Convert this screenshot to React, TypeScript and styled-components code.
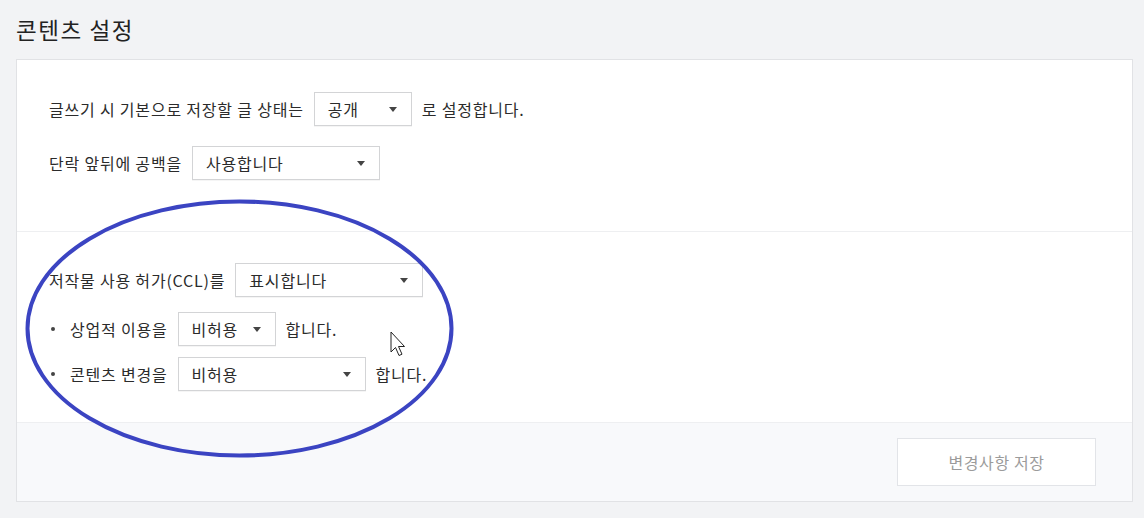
import React from "react";
import styled, { createGlobalStyle } from "styled-components";

const GlobalStyle = createGlobalStyle`
  html, body { margin: 0; padding: 0; background: #f2f3f5; }
  body { font-family: "Noto Sans CJK KR", "Noto Sans", sans-serif; color: #333; }
  * { box-sizing: border-box; }
`;

const Page = styled.div`
  position: relative;
  width: 1144px;
  height: 518px;
  padding: 14px 11px 0 16px;
  overflow: hidden;
`;

const Title = styled.h2`
  margin: 0 0 15px 0;
  font-size: 22.5px;
  font-weight: 400;
  line-height: 30px;
  color: #222;
  letter-spacing: 1.6px;
`;

const Card = styled.div`
  background: #fff;
  border: 1px solid #e1e2e5;
`;

const Section = styled.div<{ $pt: number; $pb: number; $divider?: boolean }>`
  display: flex;
  flex-direction: column;
  padding: ${(p) => p.$pt}px 32px ${(p) => p.$pb}px 32px;
  border-top: ${(p) => (p.$divider ? "1px solid #eeeff1" : "none")};
`;

const Row = styled.div<{ $mt?: number }>`
  display: flex;
  align-items: center;
  gap: 10px;
  margin-top: ${(p) => p.$mt ?? 0}px;
  font-size: 16px;
  line-height: 20px;
  letter-spacing: 0.8px;
  white-space: nowrap;
  color: #2b2b2b;
`;

const BulletRow = styled(Row)`
  &::before {
    content: "";
    width: 4px;
    height: 4px;
    border-radius: 50%;
    background: #444;
    margin: 0 5px 0 2px;
  }
`;

const Label = styled.span`
  display: inline-block;
`;

const SelectBox = styled.div<{ $w: number }>`
  display: flex;
  align-items: center;
  justify-content: space-between;
  width: ${(p) => p.$w}px;
  height: 34px;
  padding: 0 14px 0 13px;
  border: 1px solid #d3d4d6;
  box-shadow: 0 1px 0 rgba(0, 0, 0, 0.04);
  background: #fff;
  font-size: 16px;
  letter-spacing: 0.8px;
  color: #2b2b2b;
`;

const Caret = styled.span`
  width: 0;
  height: 0;
  border-left: 4px solid transparent;
  border-right: 4px solid transparent;
  border-top: 5px solid #444;
`;

const Footer = styled.div`
  display: flex;
  justify-content: flex-end;
  padding: 15px 36px 15px 0;
  background: #f8f9fb;
  border-top: 1px solid #eeeff1;
`;

const SaveButton = styled.button`
  width: 199px;
  height: 48px;
  border: 1px solid #e2e4e8;
  background: #fff;
  color: #9b9b9b;
  font-family: inherit;
  font-size: 16px;
  letter-spacing: 0.6px;
  cursor: default;
`;

const Annotation = styled.svg`
  position: absolute;
  left: 0;
  top: 0;
  pointer-events: none;
`;

const Select = ({ w, value }: { w: number; value: string }) => (
  <SelectBox $w={w}>
    <span>{value}</span>
    <Caret />
  </SelectBox>
);

export default function App() {
  return (
    <>
      <GlobalStyle />
      <Page>
        <Title>콘텐츠 설정</Title>
        <Card>
          <Section $pt={32} $pb={51}>
            <Row>
              <Label>글쓰기 시 기본으로 저장할 글 상태는</Label>
              <Select w={98} value="공개" />
              <Label>로 설정합니다.</Label>
            </Row>
            <Row $mt={20}>
              <Label>단락 앞뒤에 공백을</Label>
              <Select w={188} value="사용합니다" />
            </Row>
          </Section>
          <Section $pt={31} $pb={31} $divider>
            <Row>
              <Label>저작물 사용 허가(CCL)를</Label>
              <Select w={188} value="표시합니다" />
            </Row>
            <BulletRow $mt={15}>
              <Label>상업적 이용을</Label>
              <Select w={98} value="비허용" />
              <Label>합니다.</Label>
            </BulletRow>
            <BulletRow $mt={11}>
              <Label>콘텐츠 변경을</Label>
              <Select w={188} value="비허용" />
              <Label>합니다.</Label>
            </BulletRow>
          </Section>
          <Footer>
            <SaveButton>변경사항 저장</SaveButton>
          </Footer>
        </Card>
        <Annotation width="1144" height="518" viewBox="0 0 1144 518">
          <ellipse cx="239.5" cy="328.5" rx="212" ry="127" fill="none" stroke="#3b44c2" strokeWidth="4" />
          <path
            d="M391 332 L391 352 L395.5 347.5 L399 355.5 L402 354.2 L398.5 346.5 L404.5 346.5 Z"
            fill="#fff"
            stroke="#222"
            strokeWidth="1"
            strokeLinejoin="round"
          />
        </Annotation>
      </Page>
    </>
  );
}
